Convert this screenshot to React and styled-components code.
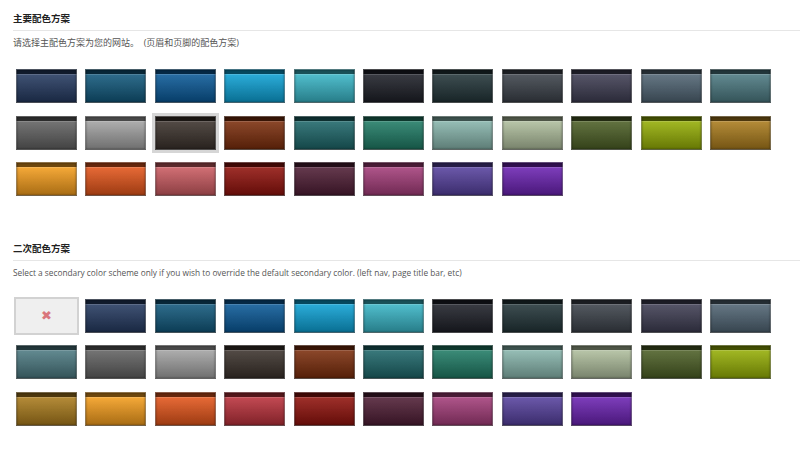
import React from 'react';
import styled, { createGlobalStyle } from 'styled-components';

const primary = [
  '#24395f', '#11577a', '#0a5896', '#0d9fd2', '#38b3c4', '#1d1f27', '#223438', '#3b4149', '#3e3d52', '#4f6372', '#4b7880',
  '#606060', '#a0a0a0', '#3a312b', '#7a2d0c', '#1d6568', '#1f7a64', '#86b3aa', '#adbc9b', '#4b5e25', '#93ac05', '#a87a1c',
  '#f19b1c', '#e1541a', '#c95a60', '#8f120c', '#4e1d34', '#a23c78', '#55409c', '#6a22b0',
];

const secondary = [
  '#24395f', '#11577a', '#0a5896', '#0d9fd2', '#38b3c4', '#1d1f27', '#223438', '#3b4149', '#3e3d52', '#4f6372',
  '#4b7880', '#606060', '#a0a0a0', '#3a312b', '#7a2d0c', '#1d6568', '#1f7a64', '#86b3aa', '#adbc9b', '#4b5e25', '#93ac05',
  '#a87a1c', '#f19b1c', '#e1541a', '#b8303a', '#8f120c', '#4e1d34', '#a23c78', '#55409c', '#6a22b0',
];

export default function App() {
  return (
    <>
      <GlobalStyle />
      <Page>
        <Section>
          <Title>主要配色方案</Title>
          <Desc>请选择主配色方案为您的网站。{'\u00a0\u00a0'}(页眉和页脚的配色方案)</Desc>
          <Grid>
            {primary.map((c, i) => (
              <Swatch key={i} $color={c} $selected={i === 13} />
            ))}
          </Grid>
        </Section>
        <Section $second>
          <Title>二次配色方案</Title>
          <Desc $latin>
            Select a secondary color scheme only if you wish to override the default secondary color. (left nav, page title bar, etc)
          </Desc>
          <Grid>
            <NoneSwatch>✖</NoneSwatch>
            {secondary.map((c, i) => (
              <Swatch key={i} $color={c} />
            ))}
          </Grid>
        </Section>
      </Page>
    </>
  );
}

const GlobalStyle = createGlobalStyle`
  body {
    margin: 0;
    background: #fff;
    font-family: "Open Sans", "Noto Sans CJK SC", sans-serif;
  }
`;

const Page = styled.div`
  width: 800px;
  height: 452px;
  overflow: hidden;
  padding: 12px 0 0 13px;
  box-sizing: border-box;
`;

const Section = styled.section`
  margin-top: ${(p) => (p.$second ? '45.5px' : '0')};
`;

const Title = styled.h3`
  margin: 0;
  font-family: "Noto Sans CJK SC", sans-serif;
  font-size: 9.5px;
  line-height: 12px;
  font-weight: 700;
  color: #222;
  padding-bottom: 6px;
  border-bottom: 1px solid #e6e6e6;
`;

const Desc = styled.p`
  margin: 6px 0 0;
  font-family: "Open Sans", "Noto Sans CJK SC", sans-serif;
  font-size: ${(p) => (p.$latin ? '8.3px' : '9px')};
  line-height: 12px;
  color: #555;
  white-space: nowrap;
`;

const Grid = styled.div`
  display: grid;
  grid-template-columns: repeat(11, 61px);
  grid-auto-rows: 34px;
  column-gap: 8.4px;
  row-gap: 12.5px;
  margin-top: 20px;
  padding-left: 3px;
`;

const Swatch = styled.div`
  box-sizing: border-box;
  background-color: ${(p) => p.$color};
  background-image:
    linear-gradient(to bottom,
      rgba(0, 0, 0, 0.55) 0, rgba(0, 0, 0, 0.55) 4px,
      rgba(255, 255, 255, 0.26) 4px, rgba(255, 255, 255, 0.26) 5px,
      rgba(255, 255, 255, 0.12) 5px, rgba(0, 0, 0, 0.3) 100%);
  border: 1px solid rgba(120, 120, 120, 0.55);
  box-shadow: inset 0 0 2px rgba(0, 0, 0, 0.5);
  outline: ${(p) => (p.$selected ? '3px solid #d6d6d6' : 'none')};
`;

const NoneSwatch = styled.div`
  display: flex;
  align-items: center;
  justify-content: center;
  background: #efefef;
  outline: 2px solid #d2d2d2;
  color: #d9767c;
  font-family: "DejaVu Sans", sans-serif;
  font-size: 13px;
  font-weight: 700;
`;
